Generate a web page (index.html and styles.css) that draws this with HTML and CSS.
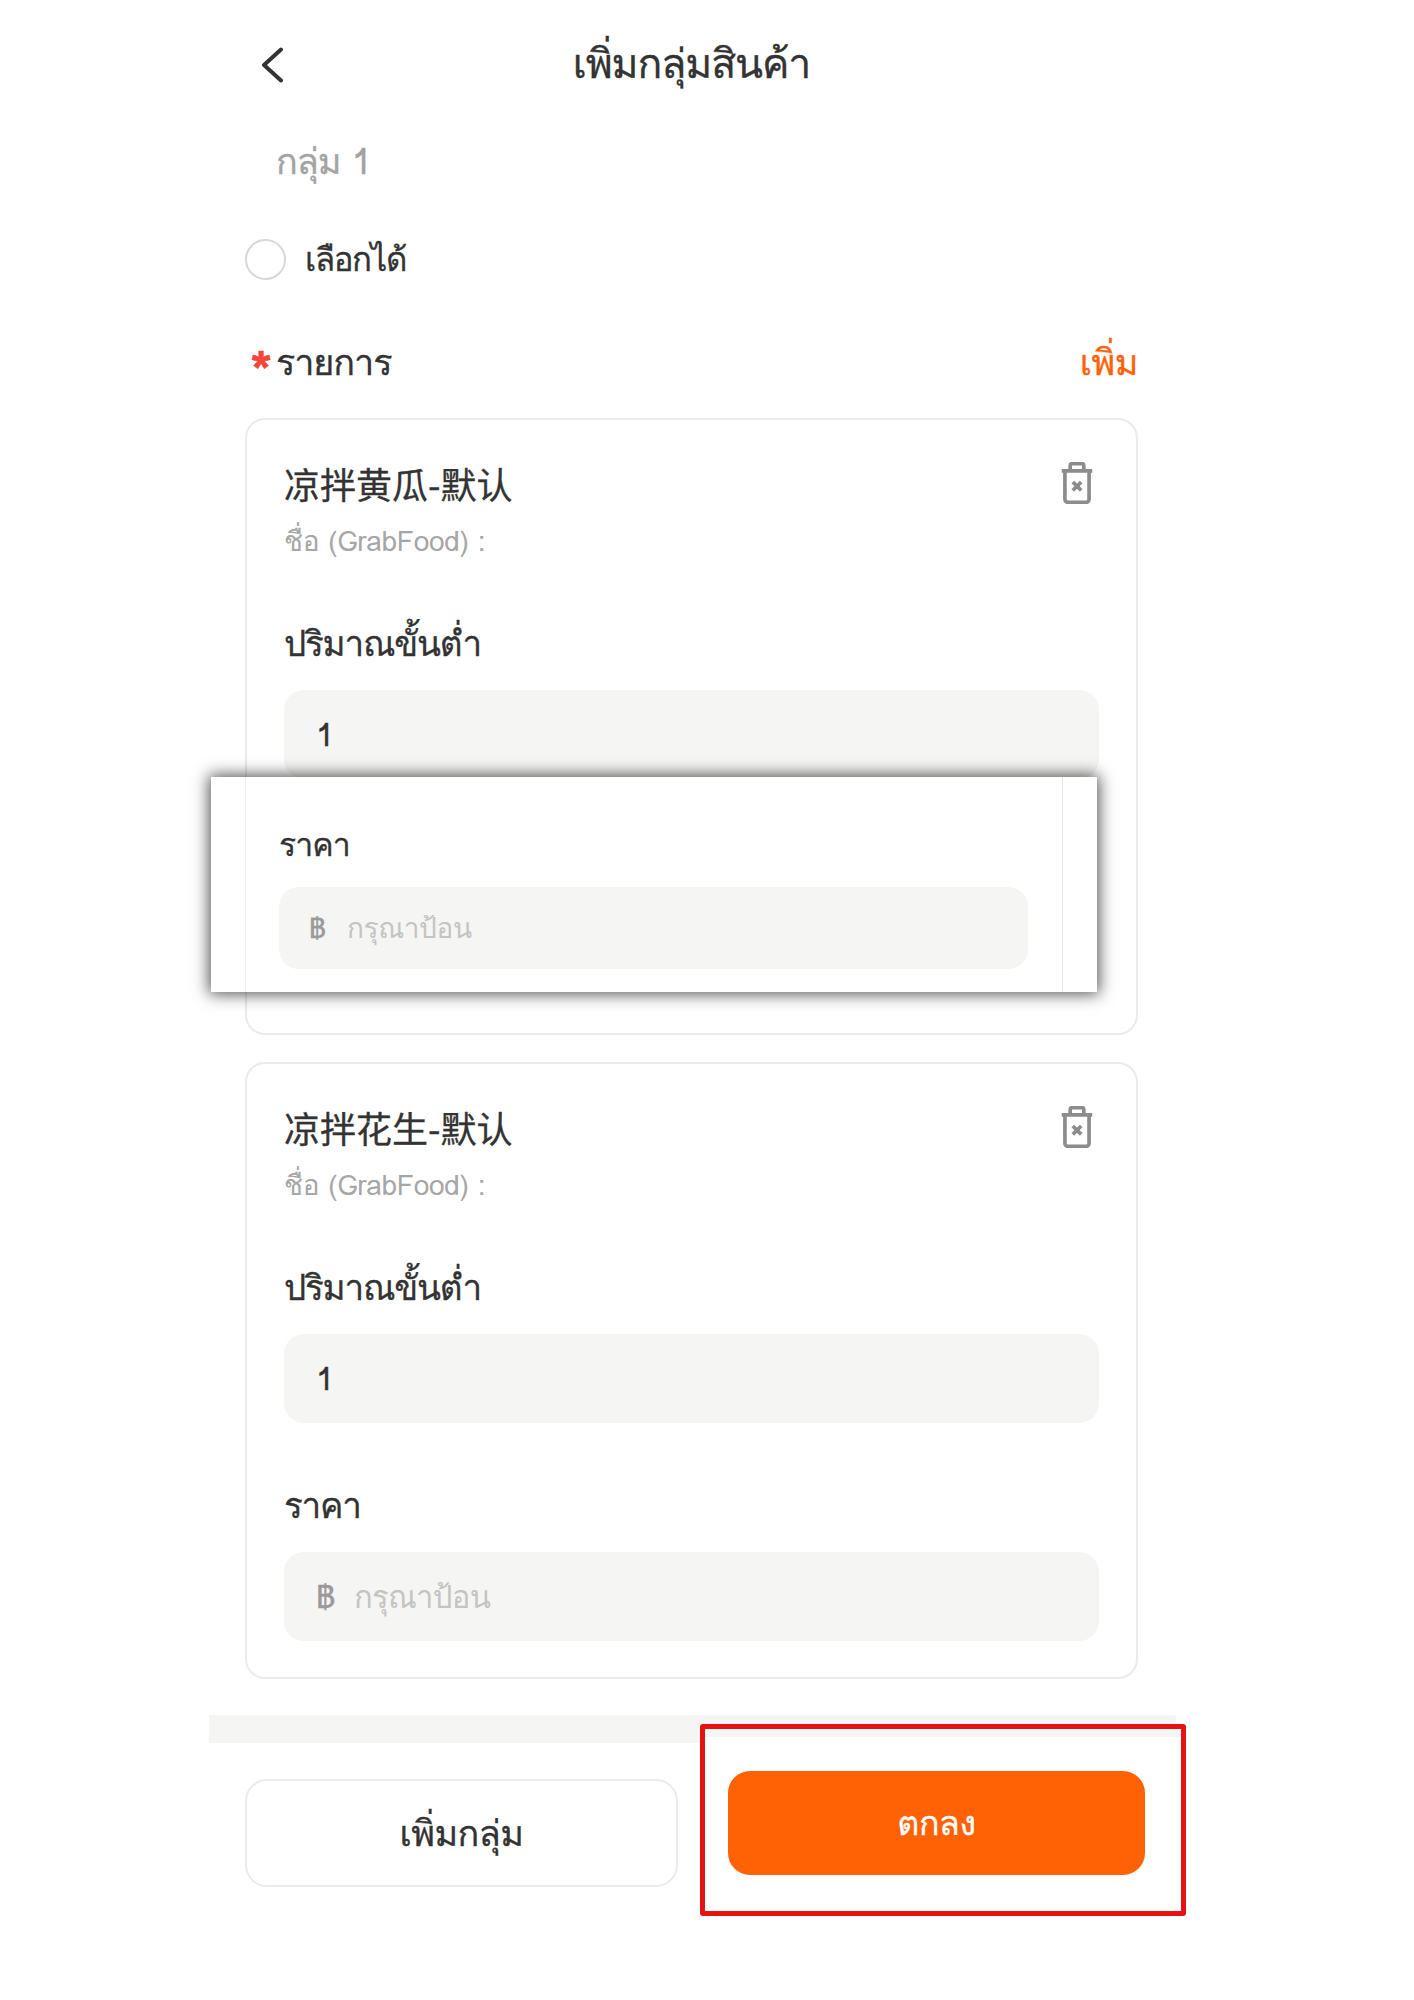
FILE: index.html
```html
<!DOCTYPE html>
<html lang="th">
<head>
<meta charset="utf-8">
<title>เพิ่มกลุ่มสินค้า</title>
<link rel="stylesheet" href="styles.css">
</head>
<body>
<main class="page">
  <header class="topbar">
    <svg class="back" viewBox="0 0 24 36" width="24" height="36"><path d="M21 2.500 4 18l17 15.500" fill="none" stroke="#333" stroke-width="4" stroke-linecap="round" stroke-linejoin="round"/></svg>
    <h1 class="title">เพิ่มกลุ่มสินค้า</h1>
  </header>
  <div class="group-name">กลุ่ม 1</div>
  <label class="option"><span class="radio"></span><span>เลือกได้</span></label>
  <div class="list-head">
    <div class="list-title"><span class="star">*</span>รายการ</div>
    <div class="add">เพิ่ม</div>
  </div>

  <section class="card">
    <div class="card-head">
      <div class="card-name">凉拌黄瓜-默认</div>
      <svg class="trash" viewBox="0 0 32 40" width="34" height="42"><path d="M1.500 8.500h29M9.500 8V3.500a2 2 0 0 1 2-2h9a2 2 0 0 1 2 2V8M4.500 9v26.500a3 3 0 0 0 3 3h17a3 3 0 0 0 3-3V9M12 19l8 8M20 19l-8 8" fill="none" stroke="#8c8c8c" stroke-width="3.500"/></svg>
    </div>
    <div class="card-sub">ชื่อ (GrabFood) :</div>
    <div class="field-label first">ปริมาณขั้นต่ำ</div>
    <div class="input"><span class="value">1</span></div>
    <div class="hidden-field">
      <div class="field-label">ราคา</div>
      <div class="input"><span class="baht">฿</span><span class="placeholder">กรุณาป้อน</span></div>
    </div>
  </section>

  <section class="card">
    <div class="card-head">
      <div class="card-name">凉拌花生-默认</div>
      <svg class="trash" viewBox="0 0 32 40" width="34" height="42"><path d="M1.500 8.500h29M9.500 8V3.500a2 2 0 0 1 2-2h9a2 2 0 0 1 2 2V8M4.500 9v26.500a3 3 0 0 0 3 3h17a3 3 0 0 0 3-3V9M12 19l8 8M20 19l-8 8" fill="none" stroke="#8c8c8c" stroke-width="3.500"/></svg>
    </div>
    <div class="card-sub">ชื่อ (GrabFood) :</div>
    <div class="field-label first">ปริมาณขั้นต่ำ</div>
    <div class="input"><span class="value">1</span></div>
    <div class="field-label">ราคา</div>
    <div class="input"><span class="baht">฿</span><span class="placeholder">กรุณาป้อน</span></div>
  </section>

  <div class="strip"></div>
  <footer class="footer">
    <button class="btn-outline">เพิ่มกลุ่ม</button>
  </footer>
</main>

<aside class="patch-price">
  <div class="patch-label">ราคา</div>
  <div class="patch-input"><span class="patch-baht">฿</span><span class="patch-placeholder">กรุณาป้อน</span></div>
</aside>

<aside class="patch-confirm">
  <div class="patch-strip"></div>
  <button class="btn-primary">ตกลง</button>
</aside>
</body>
</html>
```
FILE: styles.css
```css
* { box-sizing: border-box; }
html, body { margin: 0; padding: 0; background: #fff; }
body {
  position: relative;
  width: 1414px;
  height: 2000px;
  overflow: hidden;
  font-family: "Loma", "Garuda", "Waree", "Noto Sans Thai Looped", "Noto Sans Thai", "Liberation Sans", "Noto Sans", "Noto Sans CJK SC", sans-serif;
  color: #333;
  -webkit-text-stroke: .3px currentColor;
}
.page { width: 893px; margin-left: 245px; }
.topbar { position: relative; height: 128px; display: flex; align-items: center; justify-content: center; }
.back { position: absolute; left: 15px; top: 47px; }
.title { margin: 0; font-size: 41px; letter-spacing: -1.1px; font-weight: 400; line-height: 48px; }
.group-name { height: 68px; padding-left: 31px; font-size: 36px; letter-spacing: -1px; line-height: 68px; color: #a3a3a3; }
.option { display: flex; align-items: center; gap: 19px; height: 62px; margin-top: 32px; font-size: 33px; letter-spacing: -1.4px; }
.radio { width: 41px; height: 41px; border: 2px solid #d8d8d8; border-radius: 50%; }
.list-head { display: flex; justify-content: space-between; align-items: center; height: 50px; margin-top: 47px; margin-bottom: 31px; font-size: 36px; letter-spacing: -1.1px; }
.list-title { display: flex; align-items: center; }
.star { width: 31px; padding-left: 5px; color: #f5453d; font-size: 58px; font-weight: 700; line-height: 34px; padding-top: 21px; }
.add { color: #ff6105; letter-spacing: -.5px; font-weight: 500; }
.card { height: 617px; padding: 0 37px; border: 2px solid #ebebeb; border-radius: 20px; margin-bottom: 27px; }
.card-head { display: flex; justify-content: space-between; align-items: center; height: 40px; position: relative; top: 43px; }
.trash { margin-right: 5px; }
.card-name { font-family: "Noto Sans CJK SC", sans-serif; font-size: 36px; line-height: 40px; }
.card-sub { margin-top: 63px; font-size: 28px; letter-spacing: -.3px; line-height: 36px; color: #a6a6a6; -webkit-text-stroke: 0; }
.field-label { margin-top: 59px; height: 50px; font-size: 35px; letter-spacing: -1.2px; line-height: 47px; }
.field-label.first { margin-top: 61px; }
.input { display: flex; align-items: center; height: 89px; margin-top: 20px; padding-left: 32px; border-radius: 20px; background: #f5f5f3; }
.value { font-size: 32px; }
.baht { width: 38px; font-size: 32px; color: #9a9a9a; }
.placeholder { font-size: 31px; letter-spacing: -.7px; color: #c4c4c4; -webkit-text-stroke: 0; }
.hidden-field { visibility: hidden; }
.strip { width: 967px; height: 28px; margin-top: 36px; margin-left: -36px; background: #f5f5f3; }
.footer { padding-top: 36px; }
.btn-outline { display: block; width: 433px; height: 108px; padding: 0; border: 2px solid #ebebeb; border-radius: 22px; background: #fff; color: #333; font: inherit; font-size: 36px; letter-spacing: -.6px; }

.patch-price { position: absolute; left: 211px; top: 777px; width: 886px; height: 215px; padding: 46px 0 0 68px; background: #fff; box-shadow: 0 0 15px 2px rgba(0, 0, 0, .68); }
.patch-price::before { content: ""; position: absolute; left: 34px; top: 0; bottom: 0; width: 1px; background: #efefef; }
.patch-price::after { content: ""; position: absolute; left: 851px; top: 0; bottom: 0; width: 1px; background: #e6e6e6; }
.patch-label { font-size: 32px; letter-spacing: -.9px; line-height: 44px; }
.patch-input { display: flex; align-items: center; width: 749px; height: 82px; margin-top: 20px; padding-left: 30px; border-radius: 20px; background: #f5f5f3; }
.patch-baht { width: 38px; font-size: 28px; color: #9a9a9a; }
.patch-placeholder { font-size: 28px; letter-spacing: -.4px; color: #c4c4c4; -webkit-text-stroke: 0; }

.patch-confirm { position: absolute; left: 700px; top: 1724px; width: 486px; height: 192px; border: 5px solid #e41212; border-radius: 3px; background: #fff; }
.patch-strip { height: 8px; background: #f5f5f3; }
.btn-primary { display: block; width: 417px; height: 104px; margin: 34px 0 0 23px; border: 0; border-radius: 22px; background: #ff6105; color: #fff; font: inherit; font-size: 34px; letter-spacing: -.4px; }
```
